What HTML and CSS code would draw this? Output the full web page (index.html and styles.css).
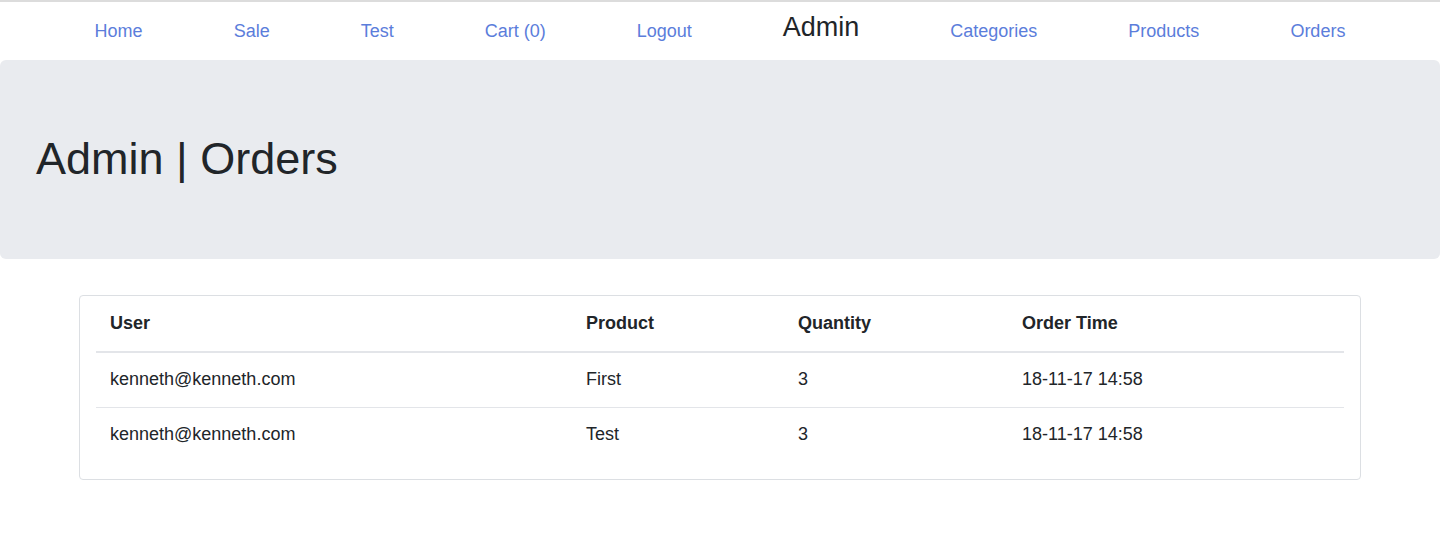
FILE: index.html
```html
<!DOCTYPE html>
<html lang="en">
<head>
<meta charset="utf-8">
<title>Admin | Orders</title>
<link rel="stylesheet" href="styles.css">
</head>
<body>
<nav class="topnav">
  <a class="nav-link" href="#">Home</a>
  <a class="nav-link" href="#">Sale</a>
  <a class="nav-link" href="#">Test</a>
  <a class="nav-link" href="#">Cart (0)</a>
  <a class="nav-link" href="#">Logout</a>
  <span class="nav-brand">Admin</span>
  <a class="nav-link" href="#">Categories</a>
  <a class="nav-link" href="#">Products</a>
  <a class="nav-link" href="#">Orders</a>
</nav>
<header class="jumbotron">
  <h1 class="page-title">Admin | Orders</h1>
</header>
<main class="container">
  <div class="card">
    <table class="orders">
      <thead>
        <tr>
          <th class="col-user">User</th>
          <th class="col-product">Product</th>
          <th class="col-qty">Quantity</th>
          <th class="col-time">Order Time</th>
        </tr>
      </thead>
      <tbody>
        <tr>
          <td>kenneth@kenneth.com</td>
          <td>First</td>
          <td>3</td>
          <td>18-11-17 14:58</td>
        </tr>
        <tr>
          <td>kenneth@kenneth.com</td>
          <td>Test</td>
          <td>3</td>
          <td>18-11-17 14:58</td>
        </tr>
      </tbody>
    </table>
  </div>
</main>
</body>
</html>
```

FILE: styles.css
```css
html, body {
  margin: 0;
  padding: 0;
}
body {
  font-family: "Liberation Sans", Arial, sans-serif;
  color: #212529;
  background: #ffffff;
  border-top: 2px solid #dcdcdc;
}
.topnav {
  display: flex;
  justify-content: center;
  align-items: flex-start;
  gap: 91px;
  height: 58px;
}
.nav-link {
  display: block;
  padding-top: 16px;
  font-size: 18px;
  line-height: 27px;
  color: #5b7ddb;
  text-decoration: none;
}
.nav-brand {
  display: block;
  padding-top: 9px;
  font-size: 27px;
  line-height: 32px;
  color: #212529;
}
.jumbotron {
  background: #e9ebef;
  border-radius: 6px;
  padding: 72px 36px 73px;
}
.page-title {
  margin: 0;
  font-size: 45px;
  line-height: 54px;
  font-weight: 400;
  color: #212529;
}
.container {
  margin: 36px 79px 0;
}
.card {
  border: 1px solid #dcdfe3;
  border-radius: 4px;
  padding: 0 16px 17px;
}
.orders {
  width: 100%;
  border-collapse: collapse;
  font-size: 18px;
  line-height: 27px;
}
.orders th,
.orders td {
  text-align: left;
  vertical-align: top;
}
.orders th {
  padding: 14px;
  font-weight: 700;
  border-bottom: 2px solid #e3e5e9;
}
.orders td {
  padding: 13px 14px 14px;
}
.orders tbody tr + tr td {
  border-top: 1px solid #e3e5e9;
}
.col-user { width: 448px; }
.col-product { width: 184px; }
.col-qty { width: 196px; }
.col-time { width: auto; }
```
